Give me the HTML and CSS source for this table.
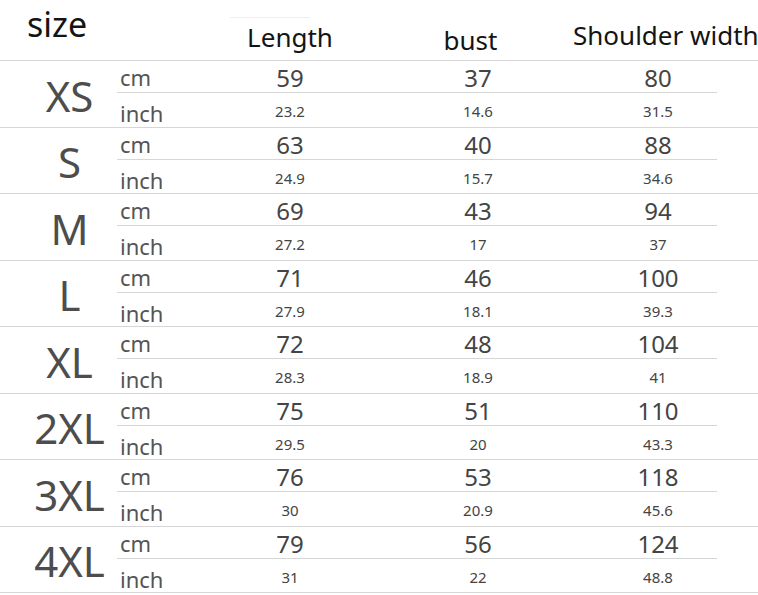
FILE: index.html
```html
<!DOCTYPE html>
<html>
<head>
<meta charset="utf-8">
<link rel="stylesheet" href="styles.css">
</head>
<body>
<div class="chart">
  <div class="head">
    <div class="h-size">size</div>
    <div class="h-unit"></div>
    <div class="h-len">Length</div>
    <div class="h-bust">bust</div>
    <div class="h-sh">Shoulder width</div>
  </div>

  <div class="row">
    <div class="size">XS</div>
    <div class="meas">
      <div class="sub cm"><span class="unit">cm</span><span class="v">59</span><span class="v">37</span><span class="v sh">80</span></div>
      <div class="sub in"><span class="unit">inch</span><span class="v">23.2</span><span class="v">14.6</span><span class="v sh">31.5</span></div>
    </div>
  </div>
  <div class="row">
    <div class="size">S</div>
    <div class="meas">
      <div class="sub cm"><span class="unit">cm</span><span class="v">63</span><span class="v">40</span><span class="v sh">88</span></div>
      <div class="sub in"><span class="unit">inch</span><span class="v">24.9</span><span class="v">15.7</span><span class="v sh">34.6</span></div>
    </div>
  </div>
  <div class="row">
    <div class="size">M</div>
    <div class="meas">
      <div class="sub cm"><span class="unit">cm</span><span class="v">69</span><span class="v">43</span><span class="v sh">94</span></div>
      <div class="sub in"><span class="unit">inch</span><span class="v">27.2</span><span class="v">17</span><span class="v sh">37</span></div>
    </div>
  </div>
  <div class="row">
    <div class="size">L</div>
    <div class="meas">
      <div class="sub cm"><span class="unit">cm</span><span class="v">71</span><span class="v">46</span><span class="v sh">100</span></div>
      <div class="sub in"><span class="unit">inch</span><span class="v">27.9</span><span class="v">18.1</span><span class="v sh">39.3</span></div>
    </div>
  </div>
  <div class="row">
    <div class="size">XL</div>
    <div class="meas">
      <div class="sub cm"><span class="unit">cm</span><span class="v">72</span><span class="v">48</span><span class="v sh">104</span></div>
      <div class="sub in"><span class="unit">inch</span><span class="v">28.3</span><span class="v">18.9</span><span class="v sh">41</span></div>
    </div>
  </div>
  <div class="row">
    <div class="size">2XL</div>
    <div class="meas">
      <div class="sub cm"><span class="unit">cm</span><span class="v">75</span><span class="v">51</span><span class="v sh">110</span></div>
      <div class="sub in"><span class="unit">inch</span><span class="v">29.5</span><span class="v">20</span><span class="v sh">43.3</span></div>
    </div>
  </div>
  <div class="row">
    <div class="size">3XL</div>
    <div class="meas">
      <div class="sub cm"><span class="unit">cm</span><span class="v">76</span><span class="v">53</span><span class="v sh">118</span></div>
      <div class="sub in"><span class="unit">inch</span><span class="v">30</span><span class="v">20.9</span><span class="v sh">45.6</span></div>
    </div>
  </div>
  <div class="row">
    <div class="size">4XL</div>
    <div class="meas">
      <div class="sub cm"><span class="unit">cm</span><span class="v">79</span><span class="v">56</span><span class="v sh">124</span></div>
      <div class="sub in"><span class="unit">inch</span><span class="v">31</span><span class="v">22</span><span class="v sh">48.8</span></div>
    </div>
  </div>
</div>
</body>
</html>
```

FILE: styles.css
```css
html, body {
  margin: 0;
  padding: 0;
  background: #ffffff;
  overflow: hidden;
}

body {
  font-family: "Noto Sans", "Open Sans", sans-serif;
  color: #4a4a4a;
}

.chart {
  width: 758px;
}

.head {
  display: grid;
  grid-template-columns: 117px 83px 180px 196px 1fr;
  height: 61px;
  box-sizing: border-box;
  border-bottom: 1px solid #d6d6d6;
  color: #141414;
  white-space: nowrap;
}

.head > div {
  align-self: start;
  line-height: 1;
}

.h-size {
  font-size: 34px;
  margin-top: 7px;
  padding-left: 27px;
}

.h-len {
  font-size: 26px;
  margin-top: 24px;
  text-align: center;
  position: relative;
}

.h-len::before {
  content: "";
  position: absolute;
  left: 30px;
  width: 80px;
  top: -7px;
  border-top: 1px solid #eeeeee;
}

.h-bust {
  font-size: 26px;
  margin-top: 27px;
  text-align: center;
  padding-right: 15px;
}

.h-sh {
  font-size: 26px;
  margin-top: 22px;
  margin-left: -3px;
}

.row {
  display: flex;
  height: 66.5px;
  box-sizing: border-box;
  border-bottom: 1px solid #d6d6d6;
}

.size {
  width: 117px;
  box-sizing: border-box;
  padding-left: 22px;
  padding-top: 3px;
  display: flex;
  align-items: center;
  justify-content: center;
  font-size: 42px;
  color: #4d4d4d;
}

.meas {
  width: 600px;
  display: flex;
  flex-direction: column;
}

.sub {
  display: grid;
  grid-template-columns: 83px 180px 196px 141px;
  white-space: nowrap;
}

.sub.cm {
  height: 32px;
  box-sizing: border-box;
  border-bottom: 1px solid #d6d6d6;
  line-height: 33px;
}

.sub.in {
  flex: 1;
}

.unit {
  padding-left: 3px;
  font-size: 22px;
  color: #555555;
}

.sub.in .unit {
  line-height: 41px;
}

.v {
  text-align: center;
  color: #444444;
}

.sub.cm .v {
  font-size: 24px;
}

.sub.in .v {
  font-size: 15px;
  line-height: 36px;
}

.v.sh {
  padding-left: 23px;
}
```
